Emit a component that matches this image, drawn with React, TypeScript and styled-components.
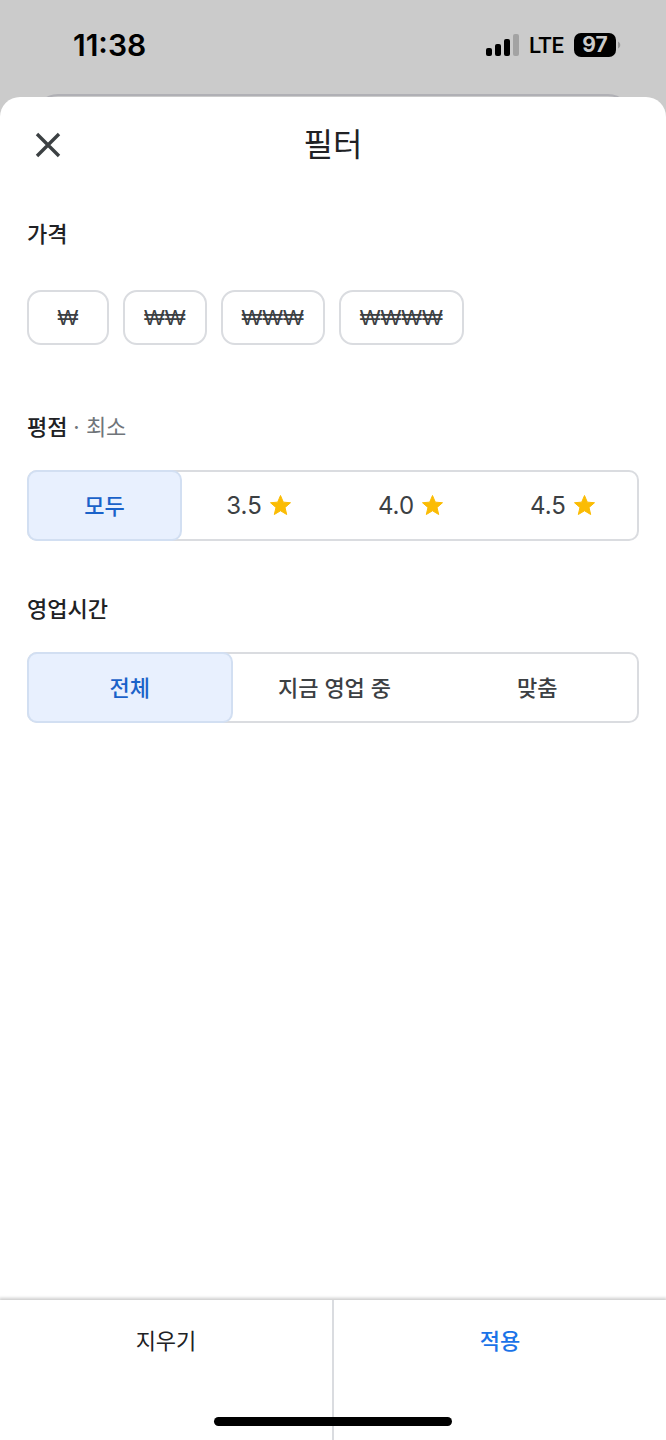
import React, { useState } from "react";
import styled, { createGlobalStyle } from "styled-components";

const GlobalStyle = createGlobalStyle`
  *, *::before, *::after { box-sizing: border-box; }
  body {
    margin: 0;
    background: #cbcbcb;
    font-family: Inter, "Noto Sans CJK KR", sans-serif;
    color: #202124;
  }
  button { font: inherit; color: inherit; cursor: pointer; }
`;

const Screen = styled.div`
  display: flex;
  flex-direction: column;
  min-height: 100vh;
`;

const StatusBar = styled.header`
  display: flex;
  align-items: center;
  justify-content: space-between;
  height: 97px;
  padding: 0 45px 8px 73px;
  color: #000;
`;

const Time = styled.time`
  font-size: 30px;
  line-height: 32px;
  font-weight: 600;
`;

const StatusIcons = styled.div`
  display: flex;
  align-items: center;
  gap: 10px;
`;

const Network = styled.span`
  padding-top: 2px;
  font-family: Roboto, sans-serif;
  font-size: 22px;
  line-height: 24px;
  font-weight: 500;
`;

const Battery = styled.div`
  display: flex;
  align-items: center;
  gap: 2px;
`;

const BatteryLevel = styled.span`
  width: 42px;
  border-radius: 7px;
  background: #000;
  color: #cbcbcb;
  font-size: 21px;
  line-height: 24px;
  font-weight: 700;
  text-align: center;
`;

const Sheet = styled.main`
  position: relative;
  flex: 1;
  display: flex;
  flex-direction: column;
  border-radius: 20px 20px 0 0;
  background: #fff;

  &::before {
    content: "";
    position: absolute;
    z-index: -1;
    top: -3px;
    left: 34px;
    right: 34px;
    height: 48px;
    border: 2px solid #b0b0b5;
    border-radius: 32px;
  }
`;

const SheetHeader = styled.div`
  display: grid;
  grid-template-columns: 40px 1fr 40px;
  align-items: center;
  height: 96px;
  padding: 0 28px;
`;

const CloseButton = styled.button`
  display: grid;
  place-items: center;
  width: 40px;
  height: 40px;
  padding: 0;
  border: 0;
  background: none;
`;

const Title = styled.h1`
  margin: 0;
  font-size: 32px;
  line-height: 40px;
  font-weight: 400;
  text-align: center;
`;

const Filters = styled.form`
  flex: 1;
  display: flex;
  flex-direction: column;
  gap: 52px;
  padding: 25px 27px;
`;

const Group = styled.fieldset<{ $roomy?: boolean }>`
  min-width: 0;
  margin: 0;
  padding: 0 0 ${(p) => (p.$roomy ? 14 : 0)}px;
  border: 0;
`;

const Legend = styled.legend<{ $gap: number }>`
  padding: 0;
  margin-bottom: ${(p) => p.$gap}px;
  font-size: 22px;
  line-height: 32px;
  font-weight: 500;
`;

const Hint = styled.span`
  color: #70757a;
  font-weight: 400;
`;

const Chips = styled.div`
  display: flex;
  flex-wrap: wrap;
  gap: 14px;
`;

const Chip = styled.button<{ $on: boolean }>`
  min-width: 82px;
  height: 55px;
  padding: 0 19px;
  border: 2px solid #dadce0;
  border-radius: 14px;
  background: ${(p) => (p.$on ? "#e8f0fe" : "#fff")};
  color: #3c4043;
  font-family: "Liberation Sans", sans-serif;
  font-size: 22px;
  line-height: 32px;
`;

const Segments = styled.div`
  display: flex;
  height: 71px;
  border: 2px solid #dadce0;
  border-radius: 10px;
`;

const Segment = styled.label`
  flex: 1 1 0;
  display: flex;
  align-items: center;
  justify-content: center;
  gap: 8px;
  margin: -2px -1px -2px -2px;
  padding: 0 2px;
  border: 2px solid transparent;
  border-radius: 10px;
  color: #3c4043;
  font-size: 22px;
  line-height: 32px;
  font-weight: 500;
  cursor: pointer;

  & + & {
    padding: 0 0 0 4px;
  }

  &:has(input:checked) {
    border-color: #d2dff2;
    background: #e8f0fe;
    color: #1a62c9;
  }
`;

const Radio = styled.input`
  appearance: none;
  position: absolute;
  width: 1px;
  height: 1px;
  margin: 0;
  opacity: 0;
`;

const Score = styled.span`
  font-size: 24px;
  font-weight: 400;
`;

const Footer = styled.footer`
  position: relative;
  display: flex;
  height: 140px;
  box-shadow: 0 -1px 3px 1px rgba(0, 0, 0, 0.2);
`;

const Action = styled.button<{ $primary?: boolean }>`
  flex: 1 1 0;
  padding: 0 0 58px;
  border: 0;
  background: #fff;
  color: ${(p) => (p.$primary ? "#1a73e8" : "#202124")};
  font-size: 22px;
  line-height: 32px;
  font-weight: ${(p) => (p.$primary ? 500 : 400)};

  &:first-child {
    border-right: 2px solid #dadce0;
  }
`;

const HomeIndicator = styled.div`
  position: absolute;
  bottom: 14px;
  left: 50%;
  width: 238px;
  height: 9px;
  margin-left: -119px;
  border-radius: 5px;
  background: #000;
`;

const SignalIcon = () => (
  <svg width="33" height="22" viewBox="0 0 33 22" aria-hidden="true">
    <rect x="0" y="14" width="6" height="8" rx="2" />
    <rect x="9" y="10" width="6" height="12" rx="2" />
    <rect x="18" y="5" width="6" height="17" rx="2" />
    <rect x="27" y="0" width="6" height="22" rx="2" fill="#a3a3a3" />
  </svg>
);

const BatteryTip = () => (
  <svg width="3" height="8" viewBox="0 0 3 8" aria-hidden="true">
    <path d="M0 0.5C3 2 3 6 0 7.500Z" fill="#999" />
  </svg>
);

const CloseIcon = () => (
  <svg width="26" height="26" viewBox="0 0 26 26" fill="none" stroke="#3c4043" strokeWidth="3.4" aria-hidden="true">
    <path d="M2 2L24 24M24 2L2 24" />
  </svg>
);

const StarIcon = () => (
  <svg width="21" height="22" viewBox="1.500 1.500 21 22" fill="#fbbc04" stroke="#fbbc04" strokeLinejoin="round" aria-hidden="true">
    <path d="M12 17.270 18.180 21l-1.640-7.030L22 9.240l-7.190-.610L12 2 9.190 8.630 2 9.240l5.460 4.730L5.820 21z" />
  </svg>
);

const prices = ["₩", "₩₩", "₩₩₩", "₩₩₩₩"];
const ratings = ["모두", "3.5", "4.0", "4.5"];
const hours = ["전체", "지금 영업 중", "맞춤"];

export default function App() {
  const [picked, setPicked] = useState<string[]>([]);
  const [rating, setRating] = useState(ratings[0]);
  const [hour, setHour] = useState(hours[0]);

  const togglePrice = (price: string) =>
    setPicked((now) => (now.includes(price) ? now.filter((p) => p !== price) : [...now, price]));

  const clear = () => {
    setPicked([]);
    setRating(ratings[0]);
    setHour(hours[0]);
  };

  return (
    <>
      <GlobalStyle />
      <Screen>
        <StatusBar>
          <Time>11:38</Time>
          <StatusIcons>
            <SignalIcon />
            <Network>LTE</Network>
            <Battery>
              <BatteryLevel>97</BatteryLevel>
              <BatteryTip />
            </Battery>
          </StatusIcons>
        </StatusBar>
        <Sheet>
          <SheetHeader>
            <CloseButton type="button" aria-label="닫기">
              <CloseIcon />
            </CloseButton>
            <Title>필터</Title>
          </SheetHeader>
          <Filters id="filters" onSubmit={(e) => e.preventDefault()}>
            <Group $roomy>
              <Legend $gap={40}>가격</Legend>
              <Chips>
                {prices.map((price) => (
                  <Chip
                    key={price}
                    type="button"
                    $on={picked.includes(price)}
                    aria-pressed={picked.includes(price)}
                    onClick={() => togglePrice(price)}
                  >
                    {price}
                  </Chip>
                ))}
              </Chips>
            </Group>
            <Group>
              <Legend $gap={27}>
                평점 <Hint>· 최소</Hint>
              </Legend>
              <Segments>
                {ratings.map((value, i) => (
                  <Segment key={value}>
                    <Radio type="radio" name="rating" checked={rating === value} onChange={() => setRating(value)} />
                    {i === 0 ? value : <Score>{value}</Score>}
                    {i > 0 && <StarIcon />}
                  </Segment>
                ))}
              </Segments>
            </Group>
            <Group>
              <Legend $gap={27}>영업시간</Legend>
              <Segments>
                {hours.map((value) => (
                  <Segment key={value}>
                    <Radio type="radio" name="hours" checked={hour === value} onChange={() => setHour(value)} />
                    {value}
                  </Segment>
                ))}
              </Segments>
            </Group>
          </Filters>
          <Footer>
            <Action type="button" onClick={clear}>지우기</Action>
            <Action type="submit" form="filters" $primary>적용</Action>
            <HomeIndicator />
          </Footer>
        </Sheet>
      </Screen>
    </>
  );
}
